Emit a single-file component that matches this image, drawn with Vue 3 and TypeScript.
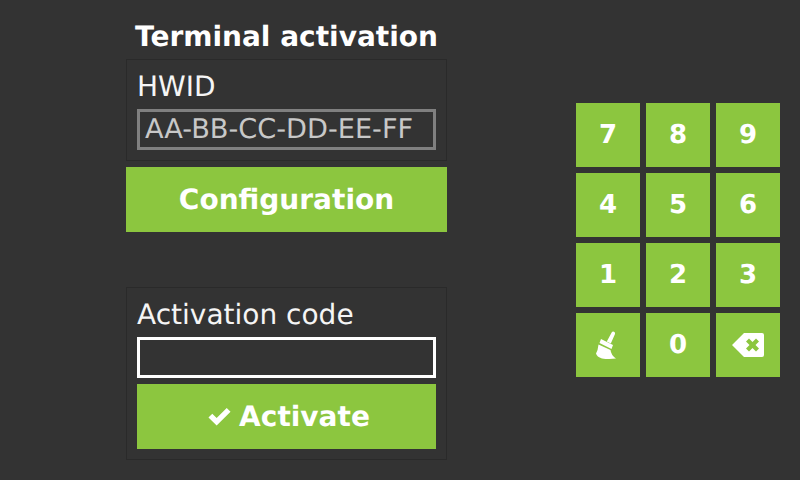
<script setup lang="ts">
const keys: string[] = ['7', '8', '9', '4', '5', '6', '1', '2', '3', 'clear', '0', 'back']
</script>

<template>
  <div class="screen">
    <section class="form">
      <h1 class="title">Terminal activation</h1>
      <div class="panel">
        <div class="label">HWID</div>
        <div class="field readonly">AA-BB-CC-DD-EE-FF</div>
      </div>
      <button class="btn">Configuration</button>
      <div class="panel second">
        <div class="label">Activation code</div>
        <div class="field"></div>
        <button class="btn activate">
          <svg class="check" viewBox="0 0 24 20" aria-hidden="true">
            <path d="M0.4 11 L4.4 7 L9 11.6 L19.6 1 L23.6 5 L9 19.6 Z" fill="#fff" />
          </svg>
          <span>Activate</span>
        </button>
      </div>
    </section>
    <section class="pad">
      <button v-for="k in keys" :key="k" class="key">
        <svg v-if="k === 'clear'" class="ico broom" viewBox="0 0 20 28" aria-hidden="true">
          <path d="M15.8 1.2 Q16.6 0 18 0.7 Q19.6 1.5 19 3 L14.8 12.5 L10.8 10.6 Z" fill="#fff" />
          <path d="M5 8 L17 14 L15.5 18 L3.5 12 Z" fill="#fff" />
          <path d="M2.5 13.5 L14.5 19 Q15 24 20 27.6 Q12 28.4 6 27.4 Q0.8 26 0 22.6 Q2 19 2.5 13.5 Z" fill="#fff" />
        </svg>
        <svg v-else-if="k === 'back'" class="ico back" viewBox="0 0 32 24" aria-hidden="true">
          <path fill-rule="evenodd" fill="#fff" d="M12 0 H30 Q32 0 32 2 V22 Q32 24 30 24 H12 L0 12 Z M17 5.5 L14 8.5 L17.5 12 L14 15.5 L17 18.5 L20.5 15 L24 18.5 L27 15.5 L23.5 12 L27 8.5 L24 5.5 L20.5 9 Z" />
        </svg>
        <template v-else>{{ k }}</template>
      </button>
    </section>
  </div>
</template>

<style scoped>
.screen {
  width: 800px;
  height: 480px;
  background: #333333;
  display: flex;
  align-items: flex-start;
  justify-content: space-between;
  padding: 0 20px 0 126px;
  box-sizing: border-box;
  font-family: "DejaVu Sans", sans-serif;
  color: #fff;
  overflow: hidden;
  text-rendering: geometricPrecision;
}
.form {
  width: 321px;
  display: flex;
  flex-direction: column;
  gap: 6px;
}
.title {
  margin: 0;
  height: 53px;
  line-height: 74px;
  font-size: 28px;
  font-weight: 700;
  text-align: center;
  white-space: nowrap;
}
.panel {
  border: 1px solid #2a2a2a;
  padding: 10px;
  display: flex;
  flex-direction: column;
  gap: 6px;
}
.panel.second {
  margin-top: 49px;
}
.label {
  font-size: 28px;
  line-height: 33px;
  height: 33px;
  color: #f5f5f5;
  white-space: nowrap;
}
.field {
  height: 41px;
  box-sizing: border-box;
  border: 3px solid #fff;
  padding: 0 5px;
  font-size: 27.2px;
  line-height: 35px;
  white-space: nowrap;
}
.field.readonly {
  border-color: #808080;
  color: #c8c8c8;
}
.btn {
  height: 65px;
  border: 0;
  padding: 0;
  background: #8cc63f;
  color: #fff;
  font: 700 28px "DejaVu Sans", sans-serif;
  text-rendering: geometricPrecision;
  display: flex;
  align-items: center;
  justify-content: center;
  gap: 8px;
}
.activate {
  padding-left: 5px;
}
.check {
  width: 23px;
  height: 19px;
}
.pad {
  display: grid;
  grid-template-columns: repeat(3, 64px);
  grid-auto-rows: 64px;
  gap: 6px;
  margin-top: 103px;
}
.key {
  border: 0;
  padding: 0;
  background: #8cc63f;
  color: #fff;
  font: 700 26px "DejaVu Sans", sans-serif;
  text-rendering: geometricPrecision;
  display: flex;
  align-items: center;
  justify-content: center;
}
.ico {
  width: 20px;
  height: 28px;
}
.ico.broom {
  margin-left: -4px;
}
.ico.back {
  width: 32px;
  height: 24px;
}
</style>
